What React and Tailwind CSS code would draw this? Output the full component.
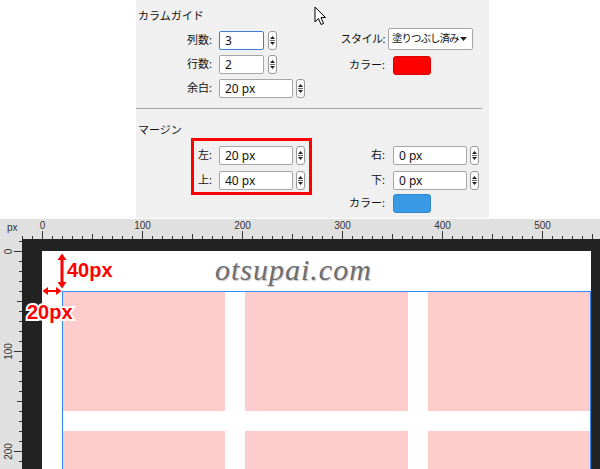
const Spinner = () => (
  <div className="w-[9px] h-[19px] bg-white border border-[#9a9a9a] rounded-[3px] flex flex-col items-center justify-center gap-[1px]">
    <svg width="5" height="3" viewBox="0 0 5 3">
      <path d="M0 3 L2.5 0 L5 3Z" fill="#222" />
    </svg>
    <div className="w-[5px] h-px bg-[#666]" />
    <svg width="5" height="3" viewBox="0 0 5 3">
      <path d="M0 0 L2.5 3 L5 0Z" fill="#222" />
    </svg>
  </div>
);

const Field = ({ value, className }) => (
  <div
    className={`h-[19px] bg-white border rounded-[2px] pl-[5px] flex items-center text-[12px] text-[#111] ${className}`}
  >
    {value}
  </div>
);

const Label = ({ children, className }) => (
  <div className={`text-right text-[11px] text-[#111] whitespace-nowrap ${className}`}>{children}</div>
);

const TopRuler = () => {
  const ticks = [];
  for (let n = -2; n <= 56; n++) {
    const x = 20 + n * 10 + 0.5;
    const y1 = n % 10 === 0 ? 12 : n % 5 === 0 ? 15 : 17;
    ticks.push(<line key={n} x1={x} x2={x} y1={y1} y2={20} stroke="#333" strokeWidth="1" />);
    if (n % 10 === 0 && n >= 0) {
      ticks.push(
        <text key={"t" + n} x={x} y={10} fontSize="10" textAnchor="middle" fill="#333" fontFamily="Liberation Sans, sans-serif">
          {n * 10}
        </text>
      );
    }
  }
  return (
    <svg width="578" height="20" className="block">
      {ticks}
    </svg>
  );
};

const LeftRuler = () => {
  const ticks = [];
  for (let n = -1; n <= 22; n++) {
    const y = 12 + n * 10 + 0.5;
    const x1 = n % 10 === 0 ? 14 : n % 5 === 0 ? 17 : 19;
    ticks.push(<line key={n} x1={x1} x2={22} y1={y} y2={y} stroke="#333" strokeWidth="1" />);
    if (n % 10 === 0 && n >= 0) {
      ticks.push(
        <text
          key={"t" + n}
          x={8}
          y={y}
          fontSize="10"
          textAnchor="middle"
          dominantBaseline="central"
          fill="#333"
          fontFamily="Liberation Sans, sans-serif"
          transform={`rotate(-90 8 ${y})`}
        >
          {n * 10}
        </text>
      );
    }
  }
  return (
    <svg width="22" height="230" className="block shrink-0 bg-[#e0e0e0]">
      {ticks}
    </svg>
  );
};

const App = () => {
  return (
    <div className="w-[600px] h-[469px] overflow-hidden bg-white font-['Noto_Sans','Noto_Sans_CJK_JP',sans-serif]">
      {/* Settings panel */}
      <div className="relative flex h-[219px]">
        <div className="w-[136px]" />
        <div className="w-[353px] h-[218px] bg-[#f0f0f0] pt-[8px]">
          {/* Column guide */}
          <div className="h-[100px]">
            <div className="pl-[2px] h-[16px] leading-[16px] text-[11px] text-[#111]">カラムガイド</div>
            <div className="flex">
              <div className="w-[194px] pt-[7px] flex flex-col gap-[5px]">
                <div className="flex items-center h-[19px]">
                  <Label className="w-[76px]">列数:</Label>
                  <Field value="3" className="ml-[7px] w-[45px] border-[#3b7dd8]" />
                  <div className="ml-[4px]"><Spinner /></div>
                </div>
                <div className="flex items-center h-[19px]">
                  <Label className="w-[76px]">行数:</Label>
                  <Field value="2" className="ml-[7px] w-[45px] border-[#a6a6a6]" />
                  <div className="ml-[4px]"><Spinner /></div>
                </div>
                <div className="flex items-center h-[19px]">
                  <Label className="w-[76px]">余白:</Label>
                  <Field value="20 px" className="ml-[7px] w-[74px] border-[#a6a6a6]" />
                  <div className="ml-[3px]"><Spinner /></div>
                </div>
              </div>
              <div className="pt-[4px] flex flex-col gap-[6px]">
                <div className="flex items-center h-[22px]">
                  <Label className="w-[55px] tracking-[-0.5px]">スタイル:</Label>
                  <div className="ml-[3px] w-[85px] h-[22px] bg-white border border-[#a6a6a6] rounded-[2px] flex items-center pl-[3px] pr-[5px] text-[10.5px] text-[#111] whitespace-nowrap overflow-hidden">
                    <span className="flex-1 tracking-[-1px]">塗りつぶし済み</span>
                    <svg width="7" height="4" viewBox="0 0 7 4" className="shrink-0">
                      <path d="M0 0 L7 0 L3.5 4Z" fill="#222" />
                    </svg>
                  </div>
                </div>
                <div className="flex items-center h-[19px]">
                  <Label className="w-[55px]">カラー:</Label>
                  <div className="ml-[8px] w-[38px] h-[19px] rounded-[3px] bg-[#ff0000] border border-[#d80000]" />
                </div>
              </div>
            </div>
          </div>
          <div className="h-px w-[346px] bg-[#a8a8a8]" />

          {/* Margin */}
          <div className="pl-[2px] mt-[13px] h-[16px] leading-[16px] text-[11px] text-[#111]">マージン</div>
          <div className="flex">
            <div className="w-[194px]">
              <div className="ml-[55px] w-[121px] h-[57px] border-[3px] border-[#ff0000] pt-[5px] flex flex-col gap-[6px]">
                <div className="flex items-center h-[19px]">
                  <Label className="w-[18px]">左:</Label>
                  <Field value="20 px" className="ml-[7px] w-[74px] border-[#a6a6a6]" />
                  <div className="ml-[3px]"><Spinner /></div>
                </div>
                <div className="flex items-center h-[19px]">
                  <Label className="w-[18px]">上:</Label>
                  <Field value="40 px" className="ml-[7px] w-[74px] border-[#a6a6a6]" />
                  <div className="ml-[3px]"><Spinner /></div>
                </div>
              </div>
            </div>
            <div className="pt-[8px] flex flex-col">
              <div className="flex items-center h-[19px]">
                <Label className="w-[55px]">右:</Label>
                <Field value="0 px" className="ml-[8px] w-[74px] border-[#a6a6a6]" />
                <div className="ml-[3px]"><Spinner /></div>
              </div>
              <div className="flex items-center h-[19px] mt-[6px]">
                <Label className="w-[55px]">下:</Label>
                <Field value="0 px" className="ml-[8px] w-[74px] border-[#a6a6a6]" />
                <div className="ml-[3px]"><Spinner /></div>
              </div>
              <div className="flex items-center h-[19px] mt-[4px]">
                <Label className="w-[55px]">カラー:</Label>
                <div className="ml-[8px] w-[38px] h-[19px] rounded-[3px] bg-[#3a9ae6] border border-[#2f86cc]" />
              </div>
            </div>
          </div>
        </div>

        {/* Mouse cursor */}
        <svg className="absolute left-[314px] top-[6px]" width="14" height="21" viewBox="0 0 14 21">
          <path d="M1 1 L1 16 L4.5 12.5 L7 18.5 L9.5 17.5 L7 11.5 L11.5 11.5 Z" fill="#fff" stroke="#000" strokeWidth="1" strokeLinejoin="round" />
        </svg>
      </div>

      {/* Canvas with rulers */}
      <div className="h-[250px] overflow-hidden flex flex-col">
        <div className="flex h-[20px] bg-[#e0e0e0]">
          <div className="w-[22px] pl-[7px] pt-[3px] text-[10px] leading-[12px] text-[#333] font-['Liberation_Sans',sans-serif]">px</div>
          <TopRuler />
        </div>
        <div className="flex flex-1">
          <LeftRuler />
          <div className="relative flex-1 bg-[#222] pl-[20px] pt-[12px]">
            <div className="w-[549px] h-[300px] bg-white pl-[20px] pt-[40px]">
              <div className="grid grid-cols-[163px_163px_163px] grid-rows-[120px_120px] gap-[20px] w-[529px] outline outline-1 -outline-offset-1 outline-[#2b8ef0]">
                {Array.from({ length: 6 }).map((_, i) => (
                  <div key={i} className="bg-[#ffcccc]" />
                ))}
              </div>
            </div>

            {/* Watermark */}
            <div className="absolute left-[193px] top-[8px] text-[30px] italic text-[#6e6e6e] tracking-[1px] font-['Liberation_Serif',serif] [text-shadow:1px_1px_1px_#c8c8c8]">
              otsupai.com
            </div>

            {/* Annotations */}
            <svg className="absolute left-[35px] top-[14px]" width="10" height="36" viewBox="0 0 10 36">
              <line x1="5" y1="4" x2="5" y2="32" stroke="#ff0000" strokeWidth="3" />
              <path d="M0.5 7 L5 0.5 L9.5 7 Z" fill="#ff0000" />
              <path d="M0.5 29 L5 35.5 L9.5 29 Z" fill="#ff0000" />
            </svg>
            <div className="absolute left-[45px] top-[19px] text-[20px] leading-[24px] font-bold text-[#ff0000] font-['Liberation_Sans',sans-serif] [-webkit-text-stroke:4px_white] [paint-order:stroke_fill]">
              40px
            </div>
            <svg className="absolute left-[20px] top-[47px]" width="20" height="10" viewBox="0 0 20 10">
              <line x1="4" y1="5" x2="16" y2="5" stroke="#ff0000" strokeWidth="2" />
              <path d="M6 1 L0.5 5 L6 9 Z" fill="#ff0000" />
              <path d="M14 1 L19.5 5 L14 9 Z" fill="#ff0000" />
            </svg>
            <div className="absolute left-[5px] top-[61px] text-[20px] leading-[24px] font-bold text-[#ff0000] font-['Liberation_Sans',sans-serif] [-webkit-text-stroke:4px_white] [paint-order:stroke_fill]">
              20px
            </div>
          </div>
        </div>
      </div>
    </div>
  );
};

export default App;
